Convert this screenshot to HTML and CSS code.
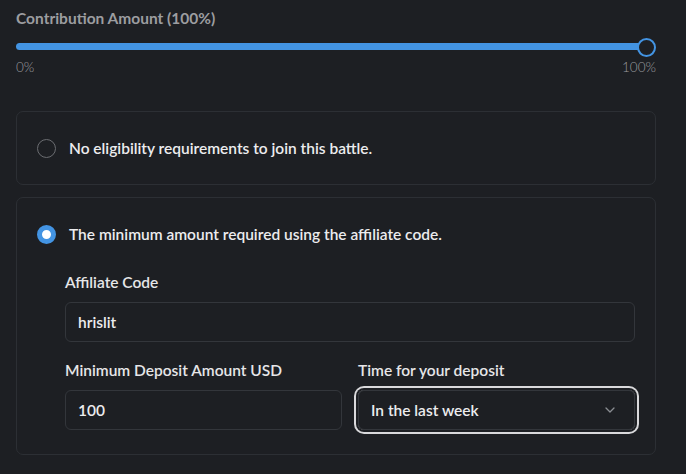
FILE: index.html
```html
<!DOCTYPE html>
<html>
<head>
<meta charset="utf-8">
<link rel="stylesheet" href="styles.css">
</head>
<body>
<div class="wrap">
  <div class="title">Contribution Amount (100%)</div>
  <div class="slider">
    <div class="track"></div>
    <div class="thumb"></div>
  </div>
  <div class="range-labels"><span>0%</span><span>100%</span></div>

  <div class="card">
    <div class="option">
      <span class="radio"></span>
      <span class="option-text">No eligibility requirements to join this battle.</span>
    </div>
  </div>

  <div class="card card-open">
    <div class="option">
      <span class="radio radio-on"></span>
      <span class="option-text">The minimum amount required using the affiliate code.</span>
    </div>
    <div class="fields">
      <div class="field">
        <div class="label">Affiliate Code</div>
        <div class="input">hrislit</div>
      </div>
      <div class="row">
        <div class="field field-tight">
          <div class="label">Minimum Deposit Amount USD</div>
          <div class="input">100</div>
        </div>
        <div class="field field-tight">
          <div class="label">Time for your deposit</div>
          <div class="input select">
            <span>In the last week</span>
            <svg class="chev" width="12" height="8" viewBox="0 0 12 8"><path d="M2 2l4 4 4-4" fill="none" stroke="#8a8d92" stroke-width="1.3" stroke-linecap="round" stroke-linejoin="round"/></svg>
          </div>
        </div>
      </div>
    </div>
  </div>
</div>
</body>
</html>
```
FILE: styles.css
```css
html, body {
  margin: 0;
  padding: 0;
  background: #1d1f23;
}
body {
  font-family: "Lato", "Noto Sans", sans-serif;
  color: #e9e9ea;
}
.wrap {
  width: 640px;
  padding: 8px 0 0 16px;
}
.title {
  font-size: 15.5px;
  line-height: 20px;
  font-weight: 700;
  color: #9c9da0;
}
.slider {
  position: relative;
  height: 18px;
  margin-top: 10px;
}
.track {
  position: absolute;
  left: 0;
  right: 10px;
  top: 5px;
  height: 7px;
  border-radius: 4px;
  background: #4394e3;
}
.thumb {
  position: absolute;
  right: 0;
  top: 0;
  width: 15px;
  height: 15px;
  border: 2px solid #4394e3;
  border-radius: 50%;
  background: #1d1f23;
}
.range-labels {
  display: flex;
  justify-content: space-between;
  margin-top: 3px;
  font-size: 13.5px;
  line-height: 16px;
  color: #9a9b9e;
  font-weight: 300;
}
.card {
  margin-top: 36px;
  border: 1px solid #2c2f34;
  border-radius: 7px;
  padding: 26px 20px;
}
.card-open {
  margin-top: 12px;
  padding-bottom: 24px;
}
.option {
  display: flex;
  align-items: center;
  height: 20px;
}
.radio {
  box-sizing: border-box;
  width: 19px;
  height: 19px;
  border-radius: 50%;
  border: 1.5px solid #6b6d71;
  margin-right: 13px;
  flex: none;
}
.radio-on {
  border: 5px solid #4394e3;
  background: #ffffff;
}
.option-text {
  font-size: 15.5px;
  font-weight: 600;
  color: #ececee;
}
.fields {
  padding-left: 28px;
  padding-top: 8px;
}
.field {
  margin-top: 20px;
}
.field-tight {
  margin-top: 0;
}
.row {
  display: grid;
  grid-template-columns: 1fr 1fr;
  column-gap: 16px;
  margin-top: 18px;
}
.label {
  font-size: 15.5px;
  line-height: 20px;
  font-weight: 600;
  color: #e6e6e8;
  margin-bottom: 10px;
}
.input {
  box-sizing: border-box;
  height: 40px;
  border: 1px solid #33363b;
  border-radius: 6px;
  padding: 0 12px;
  display: flex;
  align-items: center;
  font-size: 15.5px;
  font-weight: 600;
  color: #ececee;
}
.select {
  justify-content: space-between;
  padding-right: 18px;
  box-shadow: 0 0 0 2px #1d1f23, 0 0 0 4px #d9d9db;
  border-radius: 6px;
}
.chev {
  display: block;
}
```
